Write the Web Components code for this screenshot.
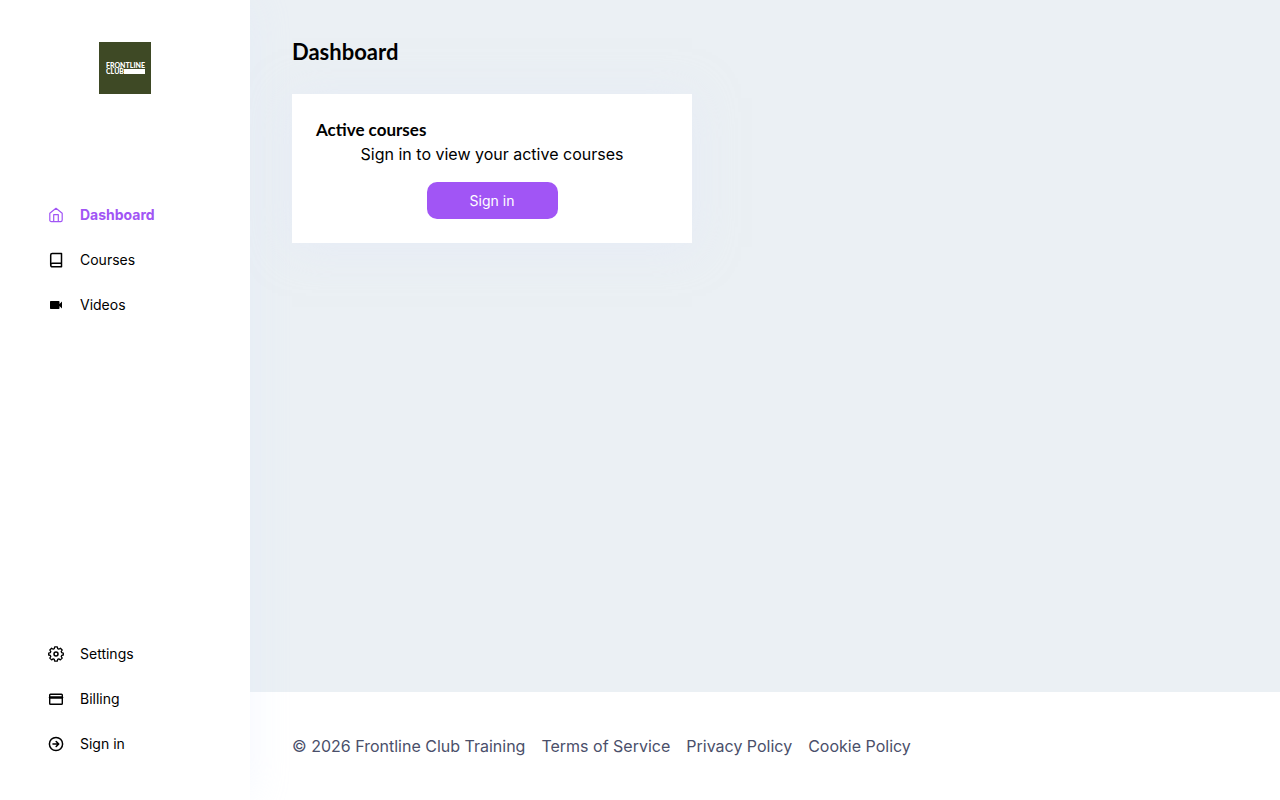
<!DOCTYPE html>
<html lang="en">
<head>
<meta charset="utf-8">
<meta name="viewport" content="width=device-width, initial-scale=1">
<title>Dashboard - Frontline Club Training</title>
<style>
  :root {
    --accent: #a155f5;
    --page-bg: #ebf0f4;
    --footer-text: #4a4f6a;
    --heading-font: Lato, "Open Sans", sans-serif;
  }
  body {
    margin: 0;
    color: #000;
    font-family: Inter, "Open Sans", sans-serif;
    font-size: 16px;
    line-height: 24px;
  }
</style>
</head>
<body>
<app-layout>
  <side-bar slot="sidebar">
    <club-logo slot="logo"></club-logo>
    <nav-item slot="main" icon="home" href="#dashboard" active>Dashboard</nav-item>
    <nav-item slot="main" icon="book" href="#courses">Courses</nav-item>
    <nav-item slot="main" icon="video" href="#videos">Videos</nav-item>
    <nav-item slot="bottom" icon="settings" href="#settings">Settings</nav-item>
    <nav-item slot="bottom" icon="card" href="#billing">Billing</nav-item>
    <nav-item slot="bottom" icon="arrow" href="#signin">Sign in</nav-item>
  </side-bar>
  <page-title>Dashboard</page-title>
  <course-card heading="Active courses">
    Sign in to view your active courses
    <app-button slot="action">Sign in</app-button>
  </course-card>
  <page-footer slot="footer"></page-footer>
</app-layout>

<script>
const icons = {
  home: `<path d="M1.800 6.200 8 1.300l6.200 4.900v6.800c0 1-.6 1.600-1.600 1.600H3.400c-1 0-1.600-.6-1.600-1.600z"/><path d="M5.700 14.500V7.700h4.600v6.800"/>`,
  book: `<path d="M2.700 12.700V3c0-.9.6-1.500 1.500-1.500h9.300v13.200h-9c-1 0-1.800-.8-1.800-1.800s.8-1.700 1.800-1.700h9" stroke-width="1.500"/>`,
  video: `<path d="M2.700 4h8c.5 0 .8.300.8.8v2.100L14 4.500v7l-2.500-2.400v2.100c0 .5-.3.8-.8.8h-8c-.5 0-.7-.3-.7-.8V4.800c0-.5.2-.8.7-.8z" fill="currentColor" stroke="none"/>`,
  settings: `<path d="m6.700.9-.4 1.800-1.100.5-1.600-1-1.800 1.800 1 1.600-.5 1.100-1.600.4v1.900l1.600.4.5 1.100-1 1.600 1.800 1.800 1.600-1 1.100.5.4 1.700h2.600l.4-1.700 1.100-.5 1.600 1 1.800-1.800-1-1.600.5-1.100 1.600-.4V7.100l-1.600-.4-.5-1.100 1-1.600-1.800-1.800-1.600 1-1.100-.5L9.300.9z" stroke-width="1.300"/><circle cx="8" cy="8" r="2" stroke-width="1.500"/>`,
  card: `<rect x="1.700" y="3.300" width="12.600" height="10" rx=".8" stroke-width="1.400"/><path d="M2 6.500h12" stroke-width="2.500"/>`,
  arrow: `<circle cx="8" cy="8" r="6.600" stroke-width="1.500"/><path d="M5 8h5.600M8.200 5.500 10.700 8l-2.500 2.500" stroke-width="1.600"/>`
};

class AppLayout extends HTMLElement {
  connectedCallback() {
    this.attachShadow({ mode: 'open' });
    this.shadowRoot.innerHTML = `
      <style>
        :host {
          display: grid;
          grid-template-columns: 250px 1fr;
          min-height: 100vh;
        }
        .content {
          display: flex;
          flex-direction: column;
          min-width: 0;
        }
        main {
          flex: 1;
          padding: 40px 42px;
          background: var(--page-bg);
        }
      </style>
      <slot name="sidebar"></slot>
      <div class="content">
        <main><slot></slot></main>
        <slot name="footer"></slot>
      </div>
    `;
  }
}
customElements.define('app-layout', AppLayout);

class SideBar extends HTMLElement {
  connectedCallback() {
    this.attachShadow({ mode: 'open' });
    this.shadowRoot.innerHTML = `
      <style>
        :host {
          display: flex;
          flex-direction: column;
          box-sizing: border-box;
          height: 100vh;
          position: sticky;
          top: 0;
          padding: 42px 0 34px;
          background: #fff;
          box-shadow: 0 0 40px rgba(220, 230, 255, 0.3);
        }
        .logo {
          display: flex;
          justify-content: center;
          margin-bottom: 98px;
        }
        nav {
          display: flex;
          flex-direction: column;
          flex: 1;
          padding: 0 48px;
        }
        .bottom {
          margin-top: auto;
        }
      </style>
      <div class="logo"><slot name="logo"></slot></div>
      <nav>
        <div><slot name="main"></slot></div>
        <div class="bottom"><slot name="bottom"></slot></div>
      </nav>
    `;
  }
}
customElements.define('side-bar', SideBar);

class ClubLogo extends HTMLElement {
  connectedCallback() {
    this.attachShadow({ mode: 'open' });
    this.shadowRoot.innerHTML = `
      <style>
        :host { display: block; }
        svg { display: block; }
        text {
          fill: #fff;
          font-family: Lato, sans-serif;
          font-size: 7px;
          font-weight: 900;
        }
      </style>
      <svg width="52" height="52" viewBox="0 0 52 52" role="img" aria-label="Frontline Club">
        <rect width="52" height="52" fill="#3e4925"/>
        <text x="7" y="26">FRONTLINE</text>
        <text x="7" y="32">CLUB</text>
        <rect x="25" y="27" width="21" height="5" fill="#fff"/>
      </svg>
    `;
  }
}
customElements.define('club-logo', ClubLogo);

class NavItem extends HTMLElement {
  connectedCallback() {
    const icon = icons[this.getAttribute('icon')];
    this.attachShadow({ mode: 'open' });
    this.shadowRoot.innerHTML = `
      <style>
        :host { display: block; }
        a {
          display: flex;
          align-items: center;
          gap: 16px;
          padding: 12px 0;
          color: inherit;
          font-size: 14px;
          line-height: 21px;
          text-decoration: none;
        }
        :host([active]) a {
          color: var(--accent);
          font-weight: 700;
        }
        a:hover { color: var(--accent); }
        svg {
          flex: none;
          fill: none;
          stroke: currentColor;
          stroke-width: 1.2;
          stroke-linejoin: round;
          stroke-linecap: round;
        }
      </style>
      <a href="${this.getAttribute('href')}">
        <svg width="16" height="16" viewBox="0 0 16 16" aria-hidden="true">${icon}</svg>
        <span><slot></slot></span>
      </a>
    `;
  }
}
customElements.define('nav-item', NavItem);

class PageTitle extends HTMLElement {
  connectedCallback() {
    this.attachShadow({ mode: 'open' });
    this.shadowRoot.innerHTML = `
      <style>
        :host { display: block; margin-bottom: 30px; }
        h1 {
          margin: 0;
          font-family: var(--heading-font);
          font-size: 22px;
          font-weight: 700;
          line-height: 24px;
        }
      </style>
      <h1><slot></slot></h1>
    `;
  }
}
customElements.define('page-title', PageTitle);

class CourseCard extends HTMLElement {
  connectedCallback() {
    this.attachShadow({ mode: 'open' });
    this.shadowRoot.innerHTML = `
      <style>
        :host {
          display: block;
          box-sizing: border-box;
          max-width: 400px;
          padding: 24px;
          background: #fff;
          box-shadow: 0 4px 40px rgba(225, 232, 250, 0.5);
        }
        h2 {
          margin: 0;
          font-family: var(--heading-font);
          font-size: 17px;
          font-weight: 700;
          line-height: 24px;
        }
        .body {
          display: flex;
          flex-direction: column;
          align-items: center;
          gap: 16px;
        }
        p { margin: 0; }
      </style>
      <h2>${this.getAttribute('heading')}</h2>
      <div class="body">
        <p><slot></slot></p>
        <slot name="action"></slot>
      </div>
    `;
  }
}
customElements.define('course-card', CourseCard);

class AppButton extends HTMLElement {
  connectedCallback() {
    this.attachShadow({ mode: 'open' });
    this.shadowRoot.innerHTML = `
      <style>
        :host { display: block; }
        button {
          display: block;
          min-width: 131px;
          padding: 8px 16px;
          border: 0;
          border-radius: 10px;
          background: var(--accent);
          color: #fff;
          font-family: inherit;
          font-size: 14px;
          line-height: 21px;
          cursor: pointer;
        }
        button:hover { opacity: 0.9; }
      </style>
      <button type="button"><slot></slot></button>
    `;
  }
}
customElements.define('app-button', AppButton);

class PageFooter extends HTMLElement {
  connectedCallback() {
    this.attachShadow({ mode: 'open' });
    this.shadowRoot.innerHTML = `
      <style>
        :host { display: block; }
        footer {
          display: flex;
          flex-wrap: wrap;
          gap: 0 16px;
          padding: 42px;
          background: #fff;
          color: var(--footer-text);
        }
        a { color: inherit; text-decoration: none; }
        a:hover { text-decoration: underline; }
      </style>
      <footer>
        <span>© 2026 Frontline Club Training</span>
        <a href="#terms">Terms of Service</a>
        <a href="#privacy">Privacy Policy</a>
        <a href="#cookies">Cookie Policy</a>
      </footer>
    `;
  }
}
customElements.define('page-footer', PageFooter);
</script>
</body>
</html>
